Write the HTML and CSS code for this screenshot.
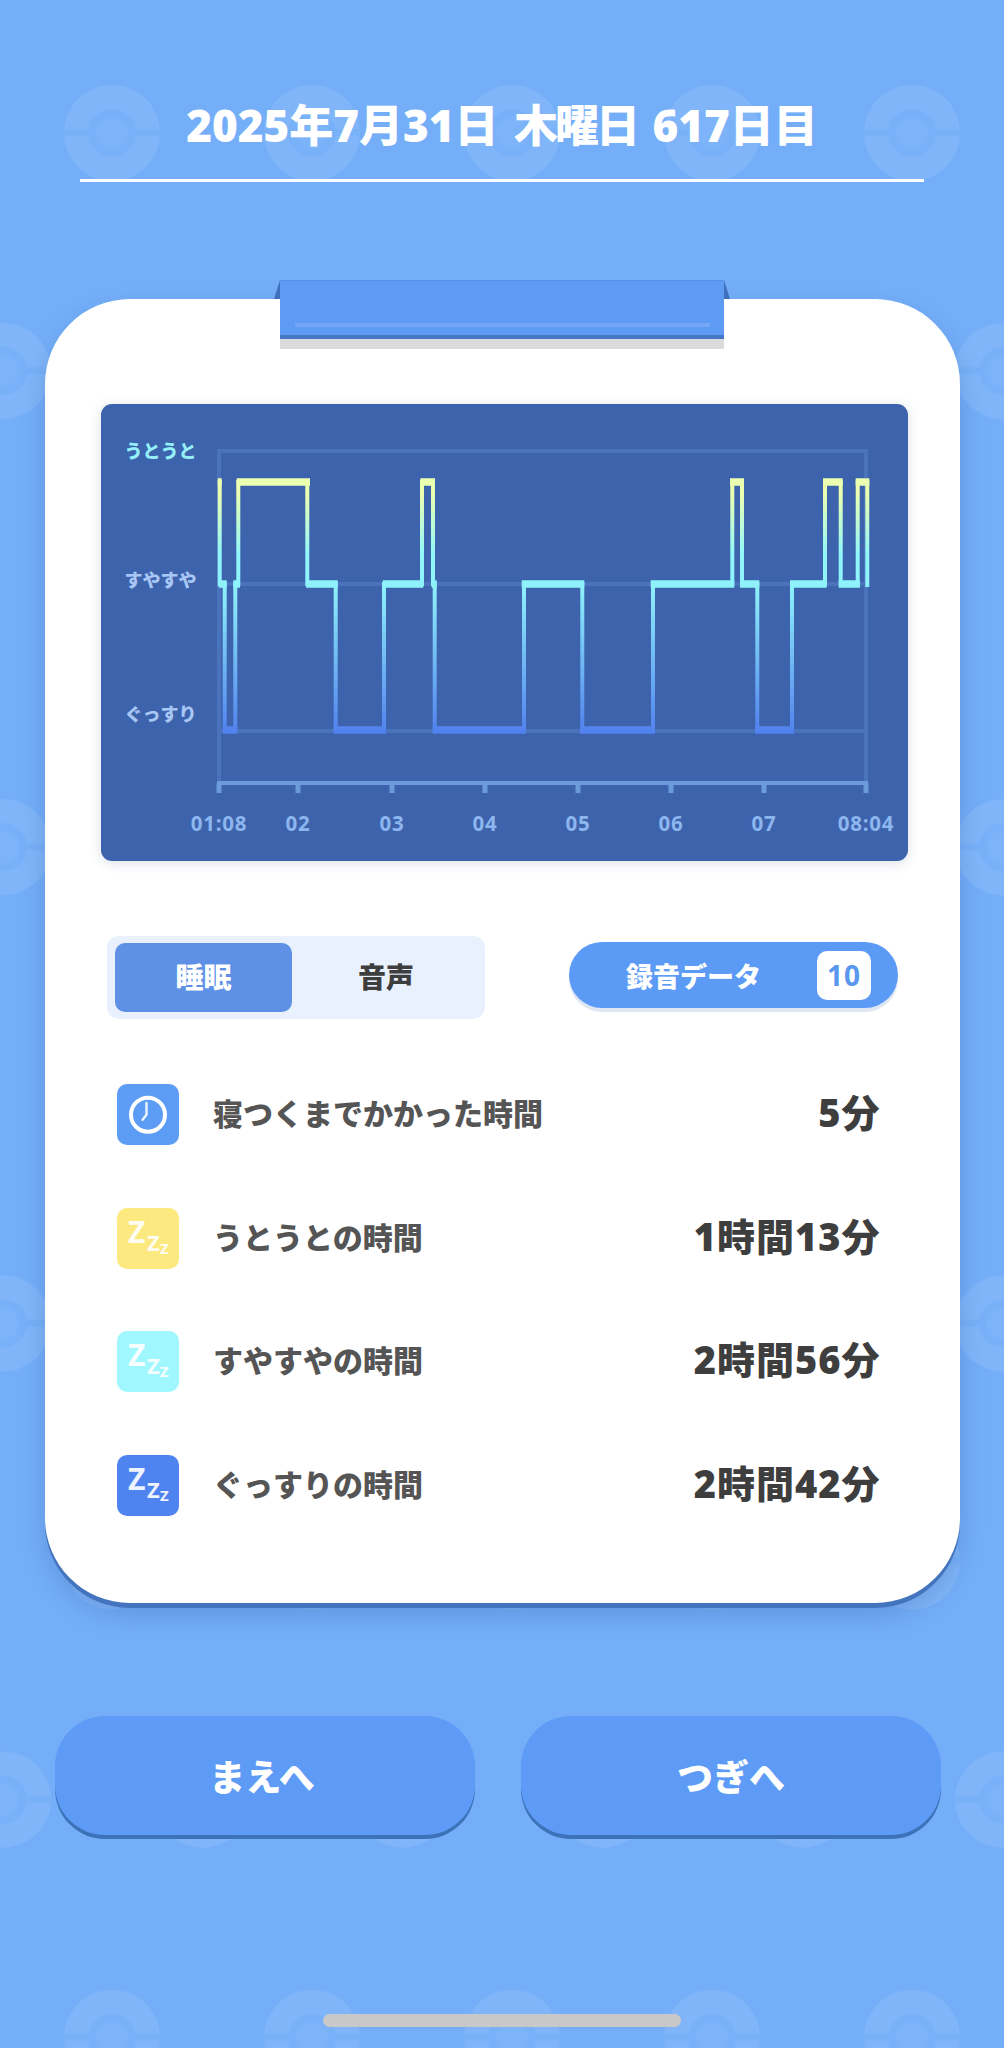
FILE: index.html
```html
<!DOCTYPE html>
<html lang="ja">

    <head>
        <meta charset="UTF-8">
        <meta name="viewport" content="width=device-width, initial-scale=1.0">
        <title>睡眠記録</title>
        <link rel="stylesheet" href="styles.css">
    </head>

    <body>
        <!-- background pattern -->
        <svg class="backdrop" width="1004" height="2048" aria-hidden="true">
            <defs>
                <g id="ball">
                    <circle r="48" fill="#80b6f9" />
                    <rect x="-48" y="-4" width="96" height="7" fill="#78b1f8" />
                    <circle r="20" fill="#7db4f9" stroke="#78b1f8" stroke-width="8" />
                </g>
                <pattern id="balls" width="400" height="476.2" patternUnits="userSpaceOnUse">
                    <use href="#ball" x="112" y="133" />
                    <use href="#ball" x="312" y="133" />
                    <use href="#ball" x="3" y="371" />
                    <use href="#ball" x="203" y="371" />
                    <use href="#ball" x="403" y="371" />
                </pattern>
            </defs>
            <rect width="1004" height="2048" fill="url(#balls)" />
        </svg>

        <header class="date-head">
            <h1>2025年7月31日 <span class="weekday">木曜日</span> 617日目</h1>
        </header>

        <main class="card">
            <div class="clip"></div>

            <section class="chart-panel">
                <svg class="chart" width="807" height="457" viewBox="101 404 807 457">
                    <defs>
                        <linearGradient id="sleepLine" gradientUnits="userSpaceOnUse" x1="0" y1="478" x2="0" y2="734">
                            <stop offset="0.06" stop-color="#ebffb0" />
                            <stop offset="0.3" stop-color="#90f6fb" />
                            <stop offset="0.42" stop-color="#8ff2fb" />
                            <stop offset="1" stop-color="#5180ee" />
                        </linearGradient>
                    </defs>

                    <!-- grid -->
                    <path class="grid" d="M217 451H868M219 451V783M866 451V783" />
                    <path class="grid" d="M219 584H866M219 731H866" />

                    <!-- time axis -->
                    <path class="axis" d="M217 783H868" />
                    <path class="tick" d="M219 783V793M298 783V793M392 783V793M485 783V793M578 783V793M671 783V793M764 783V793M866 783V793" />

                    <!-- sleep stages -->
                    <path class="stage-run" stroke="url(#sleepLine)" d="M217.7 482H221.7M218.7 584H226.7M222.7 730H237.3M233.3 584H240M236.7 482H310M306 584H337.7M333.7 730H386M382.7 584H423.3M420.3 482H435M431.7 584H436.7M432.7 730H526M521.7 584H584.3M580 730H655M650.7 584H734.3M730 482H744M740 584H759.3M755 730H794M790 584H826.7M823 482H842.7M838.7 584H860M855.7 482H869.3" />
                    <path class="stage-step" stroke="url(#sleepLine)" d="M219.7 480V586M224.7 582V732M235.3 732V582M238.3 586V480M307.3 480V586M335.7 582V732M384 732V582M422 586V480M433 480V586M434.7 582V732M524 732V582M582.3 582V732M653 732V582M732.3 586V480M742 480V586M757.3 582V732M792 732V582M825 586V480M840.7 480V586M857.7 586V480M867.3 480V587" />

                    <text class="stage-label stage-light" x="124.5" y="458">うとうと</text>
                    <text class="stage-label" x="124.5" y="587">すやすや</text>
                    <text class="stage-label" x="124.5" y="721">ぐっすり</text>

                    <text class="time-label" x="219" y="831">01:08</text>
                    <text class="time-label" x="298" y="831">02</text>
                    <text class="time-label" x="392" y="831">03</text>
                    <text class="time-label" x="485" y="831">04</text>
                    <text class="time-label" x="578" y="831">05</text>
                    <text class="time-label" x="671" y="831">06</text>
                    <text class="time-label" x="764" y="831">07</text>
                    <text class="time-label" x="866" y="831">08:04</text>
                </svg>
            </section>

            <div class="switch-row">
                <div class="tabs">
                    <button class="tab tab-active"><span class="lift">睡眠</span></button>
                    <button class="tab"><span class="lift">音声</span></button>
                </div>
                <button class="record-button">
                    <span class="record-text">録音データ</span>
                    <span class="record-count">10</span>
                </button>
            </div>

            <ul class="stats">
                <li class="stat">
                    <span class="stat-icon icon-clock">
                        <svg width="62" height="62" viewBox="0 0 62 62">
                            <circle cx="31" cy="30.7" r="17" fill="none" stroke="#fff" stroke-width="4" />
                            <path d="M29.5 19V30.7L25.6 35.7" fill="none" stroke="#fff" stroke-opacity="0.9" stroke-width="2.4" stroke-linecap="round" stroke-linejoin="round" />
                        </svg>
                    </span>
                    <span class="stat-name">寝つくまでかかった時間</span>
                    <span class="stat-value">5分</span>
                </li>
                <li class="stat">
                    <span class="stat-icon icon-light">
                        <svg width="62" height="62" viewBox="0 0 62 62">
                            <text class="zzz z-big" x="11" y="35">Z</text>
                            <text class="zzz z-mid" x="30" y="43">Z</text>
                            <text class="zzz z-small" x="43" y="46">Z</text>
                        </svg>
                    </span>
                    <span class="stat-name">うとうとの時間</span>
                    <span class="stat-value">1時間13分</span>
                </li>
                <li class="stat">
                    <span class="stat-icon icon-mid">
                        <svg width="62" height="62" viewBox="0 0 62 62">
                            <text class="zzz z-big" x="11" y="35">Z</text>
                            <text class="zzz z-mid" x="30" y="43">Z</text>
                            <text class="zzz z-small" x="43" y="46">Z</text>
                        </svg>
                    </span>
                    <span class="stat-name">すやすやの時間</span>
                    <span class="stat-value">2時間56分</span>
                </li>
                <li class="stat">
                    <span class="stat-icon icon-deep">
                        <svg width="62" height="62" viewBox="0 0 62 62">
                            <text class="zzz z-big" x="11" y="35">Z</text>
                            <text class="zzz z-mid" x="30" y="43">Z</text>
                            <text class="zzz z-small" x="43" y="46">Z</text>
                        </svg>
                    </span>
                    <span class="stat-name">ぐっすりの時間</span>
                    <span class="stat-value">2時間42分</span>
                </li>
            </ul>
        </main>

        <nav class="pager">
            <button class="pager-button pager-prev">まえへ</button>
            <button class="pager-button">つぎへ</button>
        </nav>

        <div class="home-bar"></div>
    </body>

</html>
```

FILE: styles.css
```css
*,
*::before,
*::after {
    box-sizing: border-box;
}

body {
    position: relative;
    width: 1004px;
    height: 2048px;
    margin: 0;
    overflow: hidden;
    background: #74aef8;
    font-family: "Open Sans", "Noto Sans CJK JP", sans-serif;
    font-weight: 900;
}

button {
    border: none;
    padding: 0;
    font-family: inherit;
    font-weight: 900;
}

.backdrop {
    position: absolute;
    top: 0;
    left: 0;
}

.date-head {
    position: relative;
    margin: 0 80px;
    padding: 95px 0 24px;
    border-bottom: 3px solid white;
}

.date-head h1 {
    margin: 0;
    color: white;
    font-size: 44px;
    font-weight: 800;
    line-height: 60px;
    text-align: center;
    white-space: nowrap;
    word-spacing: 4px;
}

.weekday {
    letter-spacing: -3px;
}

.card {
    position: relative;
    width: 915px;
    height: 1304px;
    margin: 117px 0 0 45px;
    padding: 105px 52px 0 56px;
    background: white;
    border-radius: 85px;
    box-shadow: 0 5px 0 #4474be, 0 12px 24px rgba(40, 80, 150, 0.25);
}

/* clipboard clip on the top edge */
.clip {
    position: absolute;
    top: -19px;
    left: 235px;
    width: 444px;
    height: 69px;
    background: linear-gradient(#dbdbdb, #dbdbdb) bottom / 100% 10px no-repeat;
}

.clip::before {
    content: "";
    position: absolute;
    top: 0;
    left: -6px;
    width: 456px;
    height: 19px;
    background: #3f70bd;
    clip-path: polygon(6px 0, 450px 0, 100% 100%, 0 100%);
}

.clip::after {
    content: "";
    position: absolute;
    top: 0;
    left: 0;
    width: 100%;
    height: 59px;
    background: linear-gradient(#75a5f5, #75a5f5) 15px 42px / 415px 4px no-repeat, #5e9bf5;
    border-top: 1px solid #5590ea;
    border-bottom: 4px solid #4678c8;
}

.chart-panel {
    height: 457px;
    background: #3c63ac;
    border-radius: 11px;
    box-shadow: 0 2px 12px rgba(60, 80, 120, 0.18);
}

.chart {
    display: block;
}

.grid {
    fill: none;
    stroke: #4a73bb;
    stroke-width: 4;
}

.axis {
    fill: none;
    stroke: #6c9bdb;
    stroke-width: 4;
}

.tick {
    fill: none;
    stroke: #6c9bdb;
    stroke-width: 5;
}

.stage-run {
    fill: none;
    stroke-width: 7.5;
}

.stage-step {
    fill: none;
    stroke-width: 4;
}

.stage-label {
    fill: #a8c6f3;
    font-size: 18px;
    font-weight: 800;
}

.stage-light {
    fill: #95eff6;
}

.time-label {
    fill: #8db6ef;
    font-size: 20.5px;
    font-weight: 700;
    letter-spacing: 0.8px;
    text-anchor: middle;
}

.switch-row {
    display: flex;
    justify-content: space-between;
    align-items: center;
    margin: 75px 10px 0 6px;
}

.tabs {
    display: flex;
    width: 378px;
    height: 83px;
    padding: 7px 8px;
    background: #e8f1fd;
    border-radius: 12px;
}

.tab {
    width: 177px;
    background: none;
    border-radius: 10px;
    color: #3e3e3e;
    font-size: 28px;
}

.tab + .tab {
    flex: 1;
    padding-left: 3px;
}

.tab-active {
    background: #5e90e6;
    color: white;
}

.lift {
    display: block;
    margin-top: -4px;
}

.record-button {
    display: flex;
    justify-content: space-between;
    align-items: center;
    width: 329px;
    height: 66px;
    margin-bottom: 5px;
    padding: 0 27px 0 57px;
    background: #5b9af5;
    border-radius: 33px;
    box-shadow: 0 4px 0 #dfe7f2;
    color: white;
    font-size: 27px;
}

.record-count {
    width: 54px;
    height: 49px;
    background: white;
    border-radius: 10px;
    color: #5a97f0;
    font-size: 28px;
    font-weight: 700;
    letter-spacing: 1px;
    line-height: 48px;
    text-align: center;
}

.stats {
    display: flex;
    flex-direction: column;
    gap: 62.5px;
    margin: 65px 27.5px 0 16px;
    padding: 0;
    list-style: none;
}

.stat {
    display: flex;
    align-items: center;
    height: 61px;
}

.stat-icon {
    width: 62px;
    height: 61px;
    flex: none;
    border-radius: 10px;
}

.stat-icon svg {
    display: block;
}

.icon-clock {
    background: #5c9cf5;
}

.icon-light {
    background: #fce97f;
}

.icon-mid {
    background: #a0f8fe;
}

.icon-deep {
    background: #4f84f0;
}

.zzz {
    fill: white;
    fill-opacity: 0.92;
    font-weight: 700;
}

.z-big {
    font-size: 30px;
}

.z-mid {
    font-size: 22px;
}

.z-small {
    font-size: 15px;
}

.stat-name {
    flex: 1;
    margin: 0 0 5px 34px;
    color: #555;
    font-size: 30px;
    white-space: nowrap;
}

.stat-value {
    margin-bottom: 8px;
    color: #3e3e3e;
    font-size: 38px;
    letter-spacing: 1px;
    white-space: nowrap;
}

.pager {
    position: relative;
    display: flex;
    gap: 46px;
    margin: 113px 0 0 55px;
}

.pager-button {
    width: 420px;
    height: 119px;
    background: #5e9bf6;
    border-radius: 50px;
    box-shadow: 0 4px 0 #3c72b8;
    color: white;
    font-size: 36px;
}

.pager-prev {
    padding-right: 6px;
}

.home-bar {
    position: absolute;
    top: 2014px;
    left: 323px;
    width: 358px;
    height: 13px;
    background: #c8c8c8;
    border-radius: 7px;
}
```
